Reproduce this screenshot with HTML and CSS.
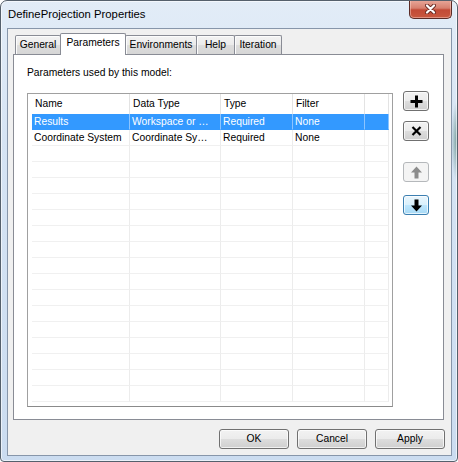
FILE: index.html
```html
<!DOCTYPE html>
<html lang="en">
<head>
    <meta charset="UTF-8">
    <title>DefineProjection Properties</title>
    <link rel="stylesheet" href="styles.css">
</head>
<body>
    <div class="window">
        <div class="titlebar">
            <span class="title">DefineProjection Properties</span>
            <div class="close-btn">
                <svg width="11" height="10" viewBox="0 0 11 10">
                    <path d="M2 1.5l7 7M9 1.5l-7 7" stroke="#6b2a22" stroke-width="4" stroke-linecap="round"/>
                    <path d="M2 1.5l7 7M9 1.5l-7 7" stroke="#fff" stroke-width="2.2" stroke-linecap="round"/>
                </svg>
            </div>
        </div>

        <div class="client">
            <div class="tabs">
                <div class="tab tab-general">General</div>
                <div class="tab tab-params active">Parameters</div>
                <div class="tab tab-env">Environments</div>
                <div class="tab tab-help">Help</div>
                <div class="tab tab-iter">Iteration</div>
            </div>

            <div class="panel">
                <div class="caption">Parameters used by this model:</div>
                <div class="panel-body">
                    <div class="grid">
                        <div class="row head">
                            <div class="cell">Name</div>
                            <div class="cell">Data Type</div>
                            <div class="cell">Type</div>
                            <div class="cell">Filter</div>
                            <div class="cell"></div>
                        </div>
                        <div class="row selected">
                            <div class="cell">Results</div>
                            <div class="cell">Workspace or …</div>
                            <div class="cell">Required</div>
                            <div class="cell">None</div>
                            <div class="cell"></div>
                        </div>
                        <div class="row">
                            <div class="cell">Coordinate System</div>
                            <div class="cell">Coordinate Sy…</div>
                            <div class="cell">Required</div>
                            <div class="cell">None</div>
                            <div class="cell"></div>
                        </div>
                        <div class="row"><div class="cell"></div><div class="cell"></div><div class="cell"></div><div class="cell"></div><div class="cell"></div></div>
                        <div class="row"><div class="cell"></div><div class="cell"></div><div class="cell"></div><div class="cell"></div><div class="cell"></div></div>
                        <div class="row"><div class="cell"></div><div class="cell"></div><div class="cell"></div><div class="cell"></div><div class="cell"></div></div>
                        <div class="row"><div class="cell"></div><div class="cell"></div><div class="cell"></div><div class="cell"></div><div class="cell"></div></div>
                        <div class="row"><div class="cell"></div><div class="cell"></div><div class="cell"></div><div class="cell"></div><div class="cell"></div></div>
                        <div class="row"><div class="cell"></div><div class="cell"></div><div class="cell"></div><div class="cell"></div><div class="cell"></div></div>
                        <div class="row"><div class="cell"></div><div class="cell"></div><div class="cell"></div><div class="cell"></div><div class="cell"></div></div>
                        <div class="row"><div class="cell"></div><div class="cell"></div><div class="cell"></div><div class="cell"></div><div class="cell"></div></div>
                        <div class="row"><div class="cell"></div><div class="cell"></div><div class="cell"></div><div class="cell"></div><div class="cell"></div></div>
                        <div class="row"><div class="cell"></div><div class="cell"></div><div class="cell"></div><div class="cell"></div><div class="cell"></div></div>
                        <div class="row"><div class="cell"></div><div class="cell"></div><div class="cell"></div><div class="cell"></div><div class="cell"></div></div>
                        <div class="row"><div class="cell"></div><div class="cell"></div><div class="cell"></div><div class="cell"></div><div class="cell"></div></div>
                        <div class="row"><div class="cell"></div><div class="cell"></div><div class="cell"></div><div class="cell"></div><div class="cell"></div></div>
                        <div class="row"><div class="cell"></div><div class="cell"></div><div class="cell"></div><div class="cell"></div><div class="cell"></div></div>
                        <div class="row"><div class="cell"></div><div class="cell"></div><div class="cell"></div><div class="cell"></div><div class="cell"></div></div>
                        <div class="row"><div class="cell"></div><div class="cell"></div><div class="cell"></div><div class="cell"></div><div class="cell"></div></div>
                    </div>

                    <div class="side">
                        <div class="tool-btn btn-add">
                            <svg width="13" height="13" viewBox="0 0 13 13"><path d="M5 0.5h3v4.5h4.5v3H8v4.5H5V8H0.5V5H5z" fill="#000"/></svg>
                        </div>
                        <div class="tool-btn btn-remove">
                            <svg width="11" height="10" viewBox="0 0 11 10"><path d="M1.5 1l8 8M9.5 1l-8 8" stroke="#000" stroke-width="2.2"/></svg>
                        </div>
                        <div class="tool-btn btn-up disabled">
                            <svg width="11" height="13" viewBox="0 0 11 13"><path d="M5.5 0.5L11 6.5H7.5v6h-4v-6H0z" fill="#8c8c8c"/></svg>
                        </div>
                        <div class="tool-btn btn-down hot">
                            <svg width="11" height="13" viewBox="0 0 11 13"><path d="M5.5 12.5L11 6.5H7.5v-6h-4v6H0z" fill="#000"/></svg>
                        </div>
                    </div>
                </div>
            </div>

            <div class="footer">
                <div class="btn">OK</div>
                <div class="btn">Cancel</div>
                <div class="btn">Apply</div>
            </div>
        </div>
    </div>
</body>
</html>
```

FILE: styles.css
```css
html, body {
    margin: 0;
    padding: 0;
    background: #ffffff;
}

body {
    font-family: 'Liberation Sans', Arial, sans-serif;
    font-size: 10.3px;
    color: #000;
}

.window {
    box-sizing: border-box;
    width: 458px;
    height: 462px;
    display: flex;
    flex-direction: column;
    border: 1px solid #55606c;
    border-radius: 7px 7px 4px 4px;
    background:
        radial-gradient(ellipse 6px 40px at 100% 140px, rgba(40, 100, 80, 0.55), rgba(40, 100, 80, 0) 100%),
        linear-gradient(180deg, #e2ecf7 0%, #d6e4f4 30%, #cbdcf0 100%);
    box-shadow: inset 0 0 0 1px rgba(255, 255, 255, 0.6);
    overflow: hidden;
}

/* title bar */
.titlebar {
    height: 27px;
    display: flex;
    align-items: flex-start;
}

.title {
    margin: 5px 0 0 7px;
    font-size: 11.3px;
    line-height: 16px;
    color: #000;
}

.close-btn {
    margin: -1px 5px 0 auto;
    width: 43px;
    height: 19px;
    box-sizing: border-box;
    border: 1px solid #5b2b26;
    border-top: none;
    border-radius: 0 0 5px 5px;
    background: linear-gradient(180deg, #e9a99b 0%, #d7806f 45%, #c24a36 55%, #c8583f 100%);
    box-shadow: inset 0 0 0 1px rgba(255, 220, 210, 0.45);
    display: flex;
    align-items: center;
    justify-content: center;
}

/* client area */
.client {
    flex: 1;
    margin: 0 5px 5px 6px;
    border: 1px solid #8796aa;
    background: #f0f0f0;
    display: flex;
    flex-direction: column;
}

.tabs {
    display: flex;
    align-items: flex-end;
    height: 21px;
    margin: 4px 0 0 7px;
}

.tab {
    box-sizing: border-box;
    height: 19px;
    margin-right: -1px;
    border: 1px solid #898c95;
    border-bottom: none;
    border-radius: 2px 2px 0 0;
    background: linear-gradient(180deg, #f3f3f3 0%, #ebebeb 50%, #dddddd 51%, #d6d6d6 100%);
    box-shadow: inset 1px 1px 0 #fcfcfc;
    text-align: center;
    line-height: 18px;
}

.tab.active {
    position: relative;
    z-index: 1;
    height: 22px;
    margin-bottom: -1px;
    background: #ffffff;
    box-shadow: none;
    line-height: 17px;
}

.tab-general { width: 46px; }
.tab-params { width: 66px; }
.tab-env { width: 72px; }
.tab-help { width: 39px; }
.tab-iter { width: 48px; }

.panel {
    margin: 0 7px 0 5px;
    border: 1px solid #898c95;
    background: #ffffff;
    padding: 11px 13px 12px 13px;
}

.caption {
    line-height: 14px;
    margin-bottom: 13px;
}

.panel-body {
    display: flex;
    align-items: flex-start;
}

/* parameters grid */
.grid {
    box-sizing: border-box;
    width: 366px;
    height: 314px;
    border: 1px solid #a0a0a0;
    border-bottom-color: #8a8a8a;
    padding-left: 4px;
    overflow: hidden;
    background: #ffffff;
}

.row {
    display: grid;
    grid-template-columns: 98px 91px 72px 72px 24px;
    height: 16px;
    line-height: 16px;
}

.row .cell {
    box-sizing: border-box;
    border-right: 1px solid #ececec;
    border-bottom: 1px solid #f0f0f0;
    padding-left: 2px;
    white-space: nowrap;
    overflow: hidden;
}

.row.head {
    height: 20px;
    line-height: 20px;
}

.row.head .cell {
    border-bottom: none;
    border-right-color: #e3e3e3;
    padding-left: 3px;
}

.row.selected .cell {
    background: #3399ff;
    color: #ffffff;
    border-right-color: #8cc4ff;
    border-bottom-color: #3399ff;
}

/* side tool buttons */
.side {
    display: flex;
    flex-direction: column;
    margin: -2px 0 0 10px;
}

.tool-btn {
    box-sizing: border-box;
    width: 26px;
    height: 20px;
    border: 1px solid #707070;
    border-radius: 3px;
    background: linear-gradient(180deg, #f2f2f2 0%, #ebebeb 50%, #dddddd 51%, #cfcfcf 100%);
    box-shadow: inset 0 0 0 1px rgba(255, 255, 255, 0.7);
    display: flex;
    align-items: center;
    justify-content: center;
}

.btn-remove { margin-top: 10px; }
.btn-up { margin-top: 21px; }
.btn-down { margin-top: 13px; }

.tool-btn.disabled {
    border-color: #b5b8bb;
    background: #f4f4f4;
    box-shadow: none;
}

.tool-btn.hot {
    border-color: #3c7fb1;
    background: linear-gradient(180deg, #eaf6fd 0%, #d9f0fc 50%, #bee6fd 51%, #a7d9f5 100%);
}

/* dialog buttons */
.footer {
    display: flex;
    justify-content: flex-end;
    gap: 8px;
    margin-top: 9px;
    padding-right: 6px;
}

.btn {
    box-sizing: border-box;
    width: 70px;
    height: 20px;
    border: 1px solid #707070;
    border-radius: 3px;
    background: linear-gradient(180deg, #f2f2f2 0%, #ebebeb 50%, #dddddd 51%, #cfcfcf 100%);
    box-shadow: inset 0 0 0 1px rgba(255, 255, 255, 0.7);
    text-align: center;
    line-height: 18px;
}
```
